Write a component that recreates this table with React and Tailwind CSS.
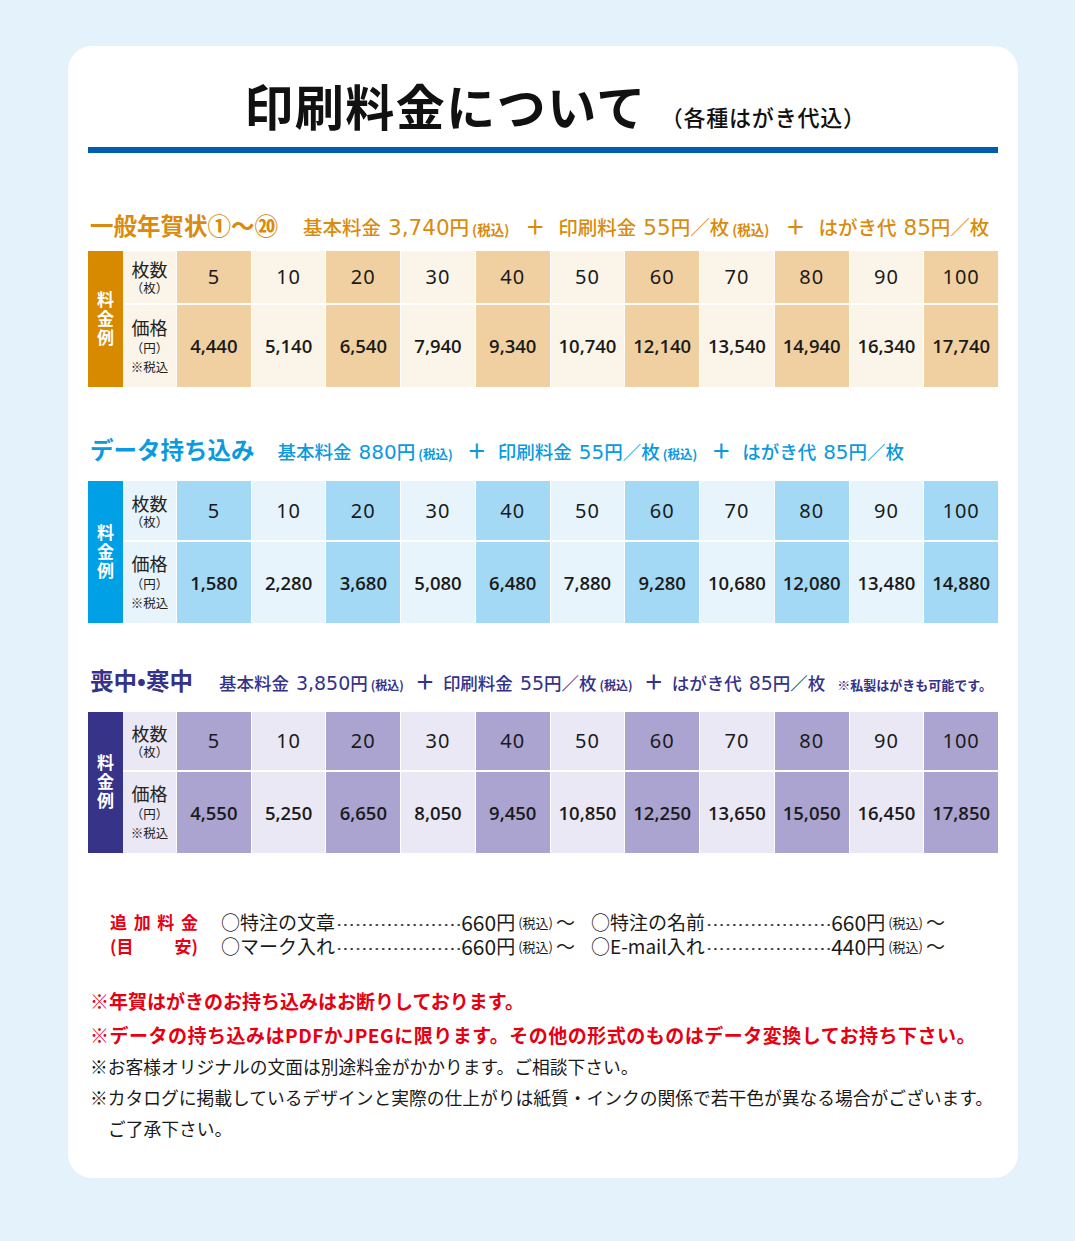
import { Fragment } from 'react';

const counts = [5, 10, 20, 30, 40, 50, 60, 70, 80, 90, 100];

const themes = {
  orange: { text: 'text-[#da8a0c]', bar: 'bg-[#d78a00]', dark: 'bg-[#f0d0a0]', light: 'bg-[#fbf4e8]' },
  blue: { text: 'text-[#0b9ade]', bar: 'bg-[#00a0e6]', dark: 'bg-[#a3d9f5]', light: 'bg-[#e7f4fc]' },
  purple: { text: 'text-[#35328a]', bar: 'bg-[#373389]', dark: 'bg-[#aba4d0]', light: 'bg-[#eae8f4]' },
};

const sections = [
  {
    id: 'nenga',
    theme: themes.orange,
    title: '一般年賀状①〜⑳',
    titleGap: 'ml-[25px]',
    sizes: { text: 'text-[19.5px]', num: 'text-[21.5px]', small: 'text-[13.5px]', plus: 'mx-[13px]' },
    head: 'mt-[57px] mb-[11px]',
    rows: 'grid-rows-[52px_82px]',
    parts: [
      { label: '基本料金', num: '3,740', tax: true },
      { label: '印刷料金', num: '55', per: true, tax: true },
      { label: 'はがき代', num: '85', per: true },
    ],
    prices: ['4,440', '5,140', '6,540', '7,940', '9,340', '10,740', '12,140', '13,540', '14,940', '16,340', '17,740'],
  },
  {
    id: 'data',
    theme: themes.blue,
    title: 'データ持ち込み',
    titleGap: 'ml-[23px]',
    sizes: { text: 'text-[18.5px]', num: 'text-[20px]', small: 'text-[12.5px]', plus: 'mx-[11px]' },
    head: 'mt-[47px] mb-[17px]',
    rows: 'grid-rows-[59px_81px]',
    parts: [
      { label: '基本料金', num: '880', tax: true },
      { label: '印刷料金', num: '55', per: true, tax: true },
      { label: 'はがき代', num: '85', per: true },
    ],
    prices: ['1,580', '2,280', '3,680', '5,080', '6,480', '7,880', '9,280', '10,680', '12,080', '13,480', '14,880'],
  },
  {
    id: 'mochu',
    theme: themes.purple,
    title: '喪中•寒中',
    titleGap: 'ml-[26px]',
    sizes: { text: 'text-[17.5px]', num: 'text-[19px]', small: 'text-[12px]', plus: 'mx-[8px]' },
    head: 'mt-[42px] mb-[17px]',
    rows: 'grid-rows-[58px_81px]',
    note: '※私製はがきも可能です。',
    parts: [
      { label: '基本料金', num: '3,850', tax: true },
      { label: '印刷料金', num: '55', per: true, tax: true },
      { label: 'はがき代', num: '85', per: true },
    ],
    prices: ['4,550', '5,250', '6,650', '8,050', '9,450', '10,850', '12,250', '13,650', '15,050', '16,450', '17,850'],
  },
];

function FeeHeader({ s }) {
  const { theme, sizes } = s;
  return (
    <div className={`flex items-baseline whitespace-nowrap h-[30px] leading-[30px] pl-[2px] ${theme.text} ${s.head}`}>
      <span className="text-[23.5px] font-bold">{s.title}</span>
      <span className={s.titleGap} />
      {s.parts.map((p, i) => (
        <Fragment key={p.label}>
          {i > 0 && <span className={`text-[20px] font-bold ${sizes.plus}`}>＋</span>}
          <span className={`${sizes.text} font-medium`}>{p.label}</span>
          <span className={`${sizes.num} ml-[7px] font-['DejaVu_Sans',sans-serif]`}>{p.num}</span>
          <span className={`${sizes.text} font-medium`}>円</span>
          {p.per && <span className={`${sizes.text} font-medium`}>／枚</span>}
          {p.tax && <span className={`${sizes.small} font-bold mx-[3px]`}>(税込)</span>}
        </Fragment>
      ))}
      {s.note && <span className="ml-[12px] text-[13px] font-bold">{s.note}</span>}
    </div>
  );
}

function PriceTable({ s }) {
  const { theme } = s;
  return (
    <div className="flex">
      <div className={`w-[35px] flex items-center justify-center text-white ${theme.bar}`}>
        <span className="[writing-mode:vertical-rl] text-[17px] font-bold tracking-[2px] leading-none">料金例</span>
      </div>
      <div className={`flex-1 grid grid-cols-[53px_repeat(11,minmax(0,1fr))] gap-x-px gap-y-[2px] bg-white ${s.rows}`}>
        <div className={`flex flex-col items-center justify-center text-[#222] ${theme.light}`}>
          <span className="text-[18px] leading-[22px]">枚数</span>
          <span className="text-[12.5px] leading-[16px]">（枚）</span>
        </div>
        {counts.map((c, i) => (
          <div
            key={c}
            className={`flex items-center justify-center text-[20px] text-[#1a1a1a] font-['Noto_Sans',sans-serif] tracking-[1px] ${i % 2 === 0 ? theme.dark : theme.light}`}
          >
            {c}
          </div>
        ))}
        <div className={`flex flex-col items-center justify-center text-[#222] ${theme.light}`}>
          <span className="text-[18px] leading-[21px]">価格</span>
          <span className="text-[12.5px] leading-[19px]">（円）</span>
          <span className="text-[12.5px] leading-[19px]">※税込</span>
        </div>
        {s.prices.map((p, i) => (
          <div
            key={p}
            className={`flex items-center justify-center text-[18.5px] font-semibold text-[#1a1a1a] font-['Open_Sans',sans-serif] ${i % 2 === 0 ? theme.dark : theme.light}`}
          >
            {p}
          </div>
        ))}
      </div>
    </div>
  );
}

const extras = [
  { name: '○特注の文章', price: '660' },
  { name: '○特注の名前', price: '660' },
  { name: '○マーク入れ', price: '660' },
  { name: '○E-mail入れ', price: '440' },
];

function ExtraItem({ item }) {
  return (
    <div className="flex items-center h-[24px] whitespace-nowrap text-[19px] leading-[24px] text-[#1a1a1a]">
      <span>{item.name}</span>
      <span className="flex-1 h-[4px] mx-[1px] translate-y-[3px] bg-[radial-gradient(circle,#333_0.9px,transparent_1.3px)] bg-[length:6.3px_4px] bg-repeat-x" />
      <span className="text-[21px]">{item.price}</span>
      <span>円</span>
      <span className="text-[13px] mx-[3px] translate-y-[1px]">(税込)</span>
      <span>〜</span>
    </div>
  );
}

export default function App() {
  return (
    <div className="min-h-[1241px] bg-[#e4f2fc] pt-[46px] pb-[62px] font-['Noto_Sans_CJK_JP',sans-serif]">
      <div className="ml-[68px] w-[950px] rounded-[24px] bg-white px-[20px] pt-[31px] pb-[34px]">
        {/* title */}
        <div className="flex items-baseline justify-center pl-[24px] text-[#111]">
          <h1 className="text-[49px] leading-[56px] font-bold tracking-[1.5px]">印刷料金について</h1>
          <span className="ml-[14px] text-[22px] font-medium tracking-[0.8px]">（各種はがき代込）</span>
        </div>
        <div className="mt-[14px] h-[6px] bg-[#005cac]" />

        {sections.map((s) => (
          <section key={s.id}>
            <FeeHeader s={s} />
            <PriceTable s={s} />
          </section>
        ))}

        {/* additional fees */}
        <div className="mt-[57px] flex">
          <div className="ml-[22px] w-[88px] text-[17px] leading-[24px] font-bold text-[#e60012]">
            <div className="flex justify-between">
              <span>追</span><span>加</span><span>料</span><span>金</span>
            </div>
            <div className="flex justify-between">
              <span>(目</span><span>安)</span>
            </div>
          </div>
          <div className="ml-[23px] grid grid-cols-[354px_354px] gap-x-[16px]">
            {extras.map((e) => (
              <ExtraItem key={e.name} item={e} />
            ))}
          </div>
        </div>

        {/* notes */}
        <div className="mt-[26px] pl-[2px] text-[17.75px]">
          <p className="leading-[34px] text-[19px] font-bold text-[#e60012]">※年賀はがきのお持ち込みはお断りしております。</p>
          <p className="leading-[33px] text-[19px] font-bold text-[#e60012] whitespace-nowrap tracking-[0.5px]">※データの持ち込みはPDFかJPEGに限ります。その他の形式のものはデータ変換してお持ち下さい。</p>
          <p className="leading-[31px] text-[#1a1a1a]">※お客様オリジナルの文面は別途料金がかかります。ご相談下さい。</p>
          <p className="leading-[31px] text-[#1a1a1a] whitespace-nowrap">※カタログに掲載しているデザインと実際の仕上がりは紙質・インクの関係で若干色が異なる場合がございます。</p>
          <p className="leading-[31px] pl-[18px] text-[#1a1a1a]">ご了承下さい。</p>
        </div>
      </div>
    </div>
  );
}
